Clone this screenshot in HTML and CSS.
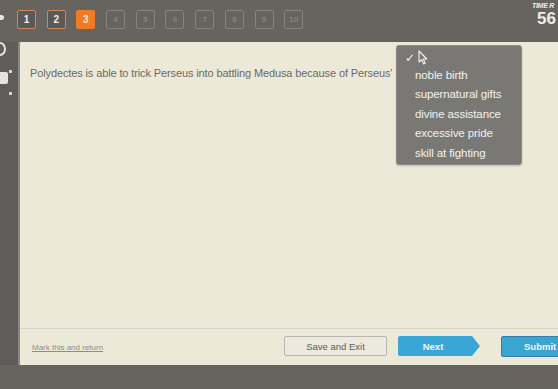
FILE: index.html
```html
<!DOCTYPE html>
<html>
<head>
<meta charset="utf-8">
<link rel="stylesheet" href="styles.css">
</head>
<body>
<div class="screen">
  <header class="topbar">
    <span class="edge-dot"></span>
    <nav class="steps">
      <span class="step done">1</span>
      <span class="step done">2</span>
      <span class="step current">3</span>
      <span class="step">4</span>
      <span class="step">5</span>
      <span class="step">6</span>
      <span class="step">7</span>
      <span class="step">8</span>
      <span class="step">9</span>
      <span class="step">10</span>
    </nav>
    <div class="timer">
      <span class="timer-label">TIME R</span>
      <span class="timer-value">56</span>
    </div>
  </header>
  <main class="main">
    <aside class="side">
      <span class="side-circle"></span>
      <span class="side-sq sq1"></span>
      <span class="side-card"></span>
      <span class="side-sq sq2"></span>
    </aside>
    <section class="panel">
      <div class="content">
        <p class="question">Polydectes is able to trick Perseus into battling Medusa because of Perseus'</p>
        <div class="dropdown">
          <div class="check">&#10003;</div>
          <ul class="options">
            <li>noble birth</li>
            <li>supernatural gifts</li>
            <li>divine assistance</li>
            <li>excessive pride</li>
            <li>skill at fighting</li>
          </ul>
          <svg class="cursor" width="10" height="15" viewBox="0 0 10 15">
            <path d="M1 1 L1 12 L3.6 9.6 L5.6 14 L7.2 13.3 L5.3 9 L8.8 9 Z" fill="#7a7875" stroke="#f2f2f2" stroke-width="1.1" stroke-linejoin="round"/>
          </svg>
        </div>
      </div>
      <footer class="footer">
        <a class="mark">Mark this and return</a>
        <button class="btn save">Save and Exit</button>
        <button class="btn next">Next</button>
        <button class="btn submit">Submit</button>
      </footer>
    </section>
  </main>
</div>
</body>
</html>
```
FILE: styles.css
```css
* { box-sizing: border-box; }
html, body {
  margin: 0;
  padding: 0;
}
body {
  width: 558px;
  height: 389px;
  overflow: hidden;
  background: #67635f;
  font-family: "Liberation Sans", Arial, sans-serif;
}
.screen {
  display: flex;
  flex-direction: column;
  width: 558px;
  height: 389px;
}
.topbar {
  height: 42px;
  flex: 0 0 42px;
  display: flex;
  align-items: flex-start;
  position: relative;
}
.edge-dot {
  width: 4px;
  height: 5px;
  margin-top: 15px;
  background: #e8e6e2;
  border-radius: 0 3px 3px 0;
}
.steps {
  display: flex;
  gap: 10.7px;
  margin-left: 13px;
  margin-top: 10px;
}
.step {
  width: 19px;
  height: 19px;
  border: 1px solid #85837f;
  border-radius: 2px;
  color: #85837f;
  font-size: 8px;
  font-weight: bold;
  display: flex;
  align-items: center;
  justify-content: center;
}
.step.done {
  border-color: #d2875a;
  background: #5b5855;
  color: #f0eeea;
  font-size: 10px;
}
.step.current {
  border-color: #f07b22;
  background: #f07b22;
  color: #fde7d2;
  font-size: 10px;
}
.timer {
  margin-left: auto;
  display: flex;
  flex-direction: column;
  align-items: flex-start;
  width: 26px;
  overflow: hidden;
  margin-top: 2px;
}
.timer-label {
  font-size: 7px;
  font-weight: bold;
  font-style: italic;
  color: #eeeeee;
  white-space: nowrap;
  letter-spacing: -0.3px;
  line-height: 8px;
}
.timer-value {
  font-size: 17px;
  font-weight: bold;
  color: #ececec;
  margin-left: 5px;
  line-height: 18px;
}
.main {
  display: flex;
  height: 323px;
  flex: 0 0 323px;
}
.side {
  width: 18px;
  flex: 0 0 18px;
  position: relative;
  background: #5f5c59;
}
.side-circle {
  position: absolute;
  left: -6px;
  top: 0;
  width: 12px;
  height: 14px;
  border: 2px solid #e6e4e0;
  border-radius: 50%;
}
.side-card {
  position: absolute;
  left: -2px;
  top: 30px;
  width: 10px;
  height: 12px;
  background: #e6e4e0;
  border-radius: 2px;
}
.side-sq {
  position: absolute;
  left: 9px;
  width: 3px;
  height: 3px;
  background: #d8d6d2;
}
.sq1 { top: 28px; }
.sq2 { top: 50px; }
.panel {
  flex: 1;
  display: flex;
  flex-direction: column;
  background: #ece9d9;
  border-left: 2px solid #8a8782;
}
.content {
  flex: 1;
  position: relative;
}
.question {
  margin: 24px 0 0 10px;
  font-size: 11px;
  line-height: 14px;
  color: #6b6a67;
  letter-spacing: -0.12px;
}
.dropdown {
  position: absolute;
  left: 376px;
  top: 3px;
  width: 126px;
  height: 120px;
  background: #7a7875;
  border: 1px solid #8d8b87;
  border-radius: 3px;
  box-shadow: 0 1px 2px rgba(0,0,0,0.2);
}
.check {
  position: absolute;
  left: 8px;
  top: 5px;
  color: #f4f4f4;
  font-size: 12px;
  font-family: "DejaVu Sans", sans-serif;
}
.cursor {
  position: absolute;
  left: 21px;
  top: 4px;
}
.options {
  list-style: none;
  margin: 0;
  padding: 20px 0 0 18px;
}
.options li {
  font-size: 11.5px;
  line-height: 19.4px;
  color: #f2f2f0;
  letter-spacing: -0.1px;
}
.footer {
  height: 37px;
  flex: 0 0 37px;
  border-top: 1px solid #d7d4c6;
  display: flex;
  align-items: center;
  padding-left: 12px;
  padding-bottom: 2px;
}
.mark {
  flex: 0 0 252px;
  font-size: 8px;
  color: #8e8c87;
  text-decoration: underline;
  margin-top: 3px;
}
.btn {
  height: 20px;
  font-family: "Liberation Sans", Arial, sans-serif;
  font-size: 9.5px;
  border-radius: 2px;
  padding: 0;
  flex: 0 0 auto;
}
.save {
  width: 103px;
  background: #ece9de;
  border: 1px solid #b9b6ab;
  color: #5d5c58;
}
.next {
  width: 82px;
  margin-left: 11px;
  background: #39a7d6;
  border: none;
  color: #f4f8fa;
  font-weight: bold;
  clip-path: polygon(0 0, calc(100% - 8px) 0, 100% 50%, calc(100% - 8px) 100%, 0 100%);
  padding-right: 12px;
}
.submit {
  width: 70px;
  margin-left: 21px;
  background: #3ba5d2;
  border: 1px solid #2f7fa6;
  color: #f4f8fa;
  font-weight: bold;
  text-align: left;
  padding-left: 22px;
  height: 21px;
}
```
